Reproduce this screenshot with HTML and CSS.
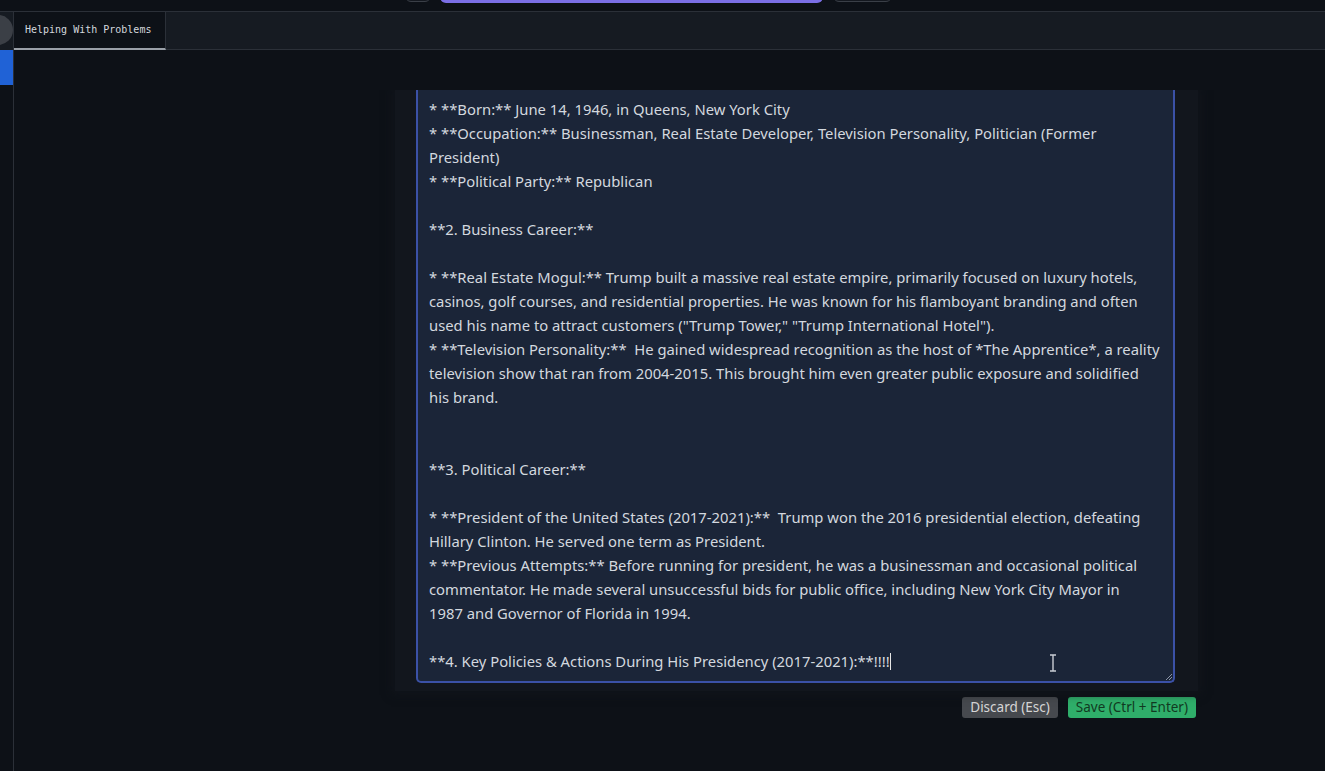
FILE: index.html
```html
<!DOCTYPE html>
<html>
<head>
<meta charset="utf-8">
<link rel="stylesheet" href="styles.css">
</head>
<body>
<div class="app">
  <div class="topbar">
    <div class="top-btn small"></div>
    <div class="top-progress"></div>
    <div class="top-btn wide"></div>
  </div>
  <div class="body">
    <div class="rail">
      <div class="rail-top"><div class="avatar"></div></div>
      <div class="rail-active"></div>
    </div>
    <div class="content">
      <div class="tabbar">
        <div class="tab">Helping With Problems</div>
      </div>
      <div class="main">
        <div class="scroll">
        <div class="editor-wrap">
          <div class="panel">
            <div class="editor">* **Born:** June 14, 1946, in Queens, New York City
* **Occupation:** Businessman, Real Estate Developer, Television Personality, Politician (Former
President)
* **Political Party:** Republican

**2. Business Career:**

* **Real Estate Mogul:** Trump built a massive real estate empire, primarily focused on luxury hotels,
casinos, golf courses, and residential properties. He was known for his flamboyant branding and often
used his name to attract customers ("Trump Tower," "Trump International Hotel").
* **Television Personality:**  He gained widespread recognition as the host of *The Apprentice*, a reality
television show that ran from 2004-2015. This brought him even greater public exposure and solidified
his brand.


**3. Political Career:**

* **President of the United States (2017-2021):**  Trump won the 2016 presidential election, defeating
Hillary Clinton. He served one term as President.
* **Previous Attempts:** Before running for president, he was a businessman and occasional political
commentator. He made several unsuccessful bids for public office, including New York City Mayor in
1987 and Governor of Florida in 1994.

**4. Key Policies &amp; Actions During His Presidency (2017-2021):**!!!!<span class="caret"></span></div>
            <svg class="resize" width="10" height="10" viewBox="0 0 10 10"><path d="M9 3 L3 9 M9 6 L6 9" stroke="#8a93a6" stroke-width="1"/></svg>
            <svg class="ibeam" width="10" height="18" viewBox="0 0 10 18"><path d="M2 1 H8 M5 1 V17 M2 17 H8" stroke="#c9cdd4" stroke-width="1.4" fill="none"/></svg>
          </div>
          <div class="actions">
            <button class="btn discard">Discard (Esc)</button>
            <button class="btn save">Save (Ctrl + Enter)</button>
          </div>
        </div>
        </div>
      </div>
    </div>
  </div>
</div>
</body>
</html>
```
FILE: styles.css
```css
* { box-sizing: border-box; }
html, body { margin: 0; padding: 0; }
body {
  background: #0d1117;
  width: 1325px;
  height: 771px;
  overflow: hidden;
  font-family: "Noto Sans", "Open Sans", sans-serif;
}
.app { display: flex; flex-direction: column; height: 771px; }
.topbar {
  height: 12px;
  flex: none;
  background: #0d1117;
  border-bottom: 1px solid #2b3038;
  display: flex;
  align-items: flex-end;
  overflow: hidden;
  padding-left: 405px;
}
.top-btn {
  height: 30px;
  margin-bottom: 9px;
  border: 1px solid #3a3f47;
  border-radius: 6px;
  background: #14181f;
}
.top-btn.small { width: 26px; }
.top-btn.wide { width: 59px; margin-left: 10px; }
.top-progress {
  width: 383px;
  height: 30px;
  margin-left: 9px;
  margin-bottom: 8px;
  border-radius: 6px;
  background: #7b6fe6;
}
.body { flex: 1; display: flex; min-height: 0; }
.rail {
  width: 14px;
  flex: none;
  border-right: 1px solid #2b3038;
  background: #0d1117;
  display: flex;
  flex-direction: column;
}
.rail-top { height: 38px; position: relative; overflow: hidden; background: #161b22; }
.avatar {
  position: absolute;
  left: -17px;
  top: 3px;
  width: 30px;
  height: 30px;
  border-radius: 50%;
  background: #3b3f46;
}
.rail-active { height: 35px; background: #2062d6; width: 13px; }
.content { flex: 1; display: flex; flex-direction: column; min-width: 0; }
.tabbar {
  height: 38px;
  flex: none;
  background: #161b22;
  border-bottom: 1px solid #2b3038;
  display: flex;
}
.tab {
  width: 152px;
  background: #0d1117;
  border-right: 1px solid #2b3038;
  border-bottom: 2px solid #9aa0a8;
  margin-bottom: -1px;
  font-family: "DejaVu Sans Mono", "Liberation Mono", monospace;
  font-size: 10px;
  color: #d4d8de;
  display: flex;
  align-items: center;
  padding-left: 11px;
  padding-bottom: 2px;
}
.main { flex: 1; padding-top: 40px; overflow: hidden; }
.scroll { height: 100%; overflow: hidden; padding-left: 381px; }
.editor-wrap { width: 803px; display: flex; flex-direction: column; }
.panel {
  position: relative;
  background: #12161d;
  padding: 0 23px 8px 21px;
  box-shadow: 0 0 8px 4px rgba(18, 22, 29, 0.6);
}
.editor {
  background: #1b2538;
  border: 2px solid #3b51a6;
  border-top: none;
  border-radius: 0 0 5px 5px;
  padding: 7px 10px 8px 11px;
  height: 593px;
  color: #d3d8df;
  font-size: 14.8px;
  line-height: 24px;
  white-space: pre;
  overflow: hidden;
}
.caret {
  display: inline-block;
  width: 1px;
  height: 17px;
  background: #e6e6e6;
  vertical-align: -3px;
}
.resize { position: absolute; right: 25px; bottom: 10px; }
.ibeam { position: absolute; left: 653px; top: 564px; }
.actions {
  display: flex;
  justify-content: flex-end;
  gap: 10px;
  padding: 6px 2px 0 0;
}
.btn {
  height: 21px;
  border: none;
  border-radius: 3px;
  font-family: "Noto Sans", "Open Sans", sans-serif;
  font-size: 13.5px;
  padding: 0 8px;
  line-height: 21px;
}
.discard { background: #46494e; color: #d6d6d6; }
.save { background: #2fae6a; color: #123a22; }
```
